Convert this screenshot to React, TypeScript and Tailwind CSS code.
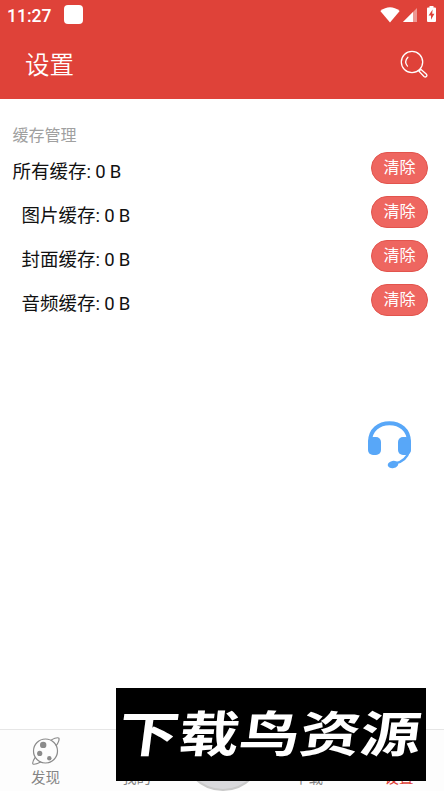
import { useState } from "react";

const rows = [
  { label: "所有缓存", size: "0 B", child: false },
  { label: "图片缓存", size: "0 B", child: true },
  { label: "封面缓存", size: "0 B", child: true },
  { label: "音频缓存", size: "0 B", child: true },
];

function StatusBar() {
  return (
    <div className="flex h-8 items-center pr-2 pl-[7px] text-white">
      <span className="mt-px w-[45px] font-[Roboto] text-[17.5px] leading-none font-medium">11:27</span>
      <span className="mt-[-3px] ml-3 h-[19px] w-[19px] rounded-[4px] bg-white" />
      <svg className="mt-[-2px] ml-auto" width="20" height="16" viewBox="0 0 20 16" fill="currentColor">
        <path d="M0.3 4Q10-3.5 19.7 4L10 15.6Z" />
      </svg>
      <svg className="mt-[-2px] ml-[3px]" width="14" height="14" viewBox="0 0 14 14" fill="currentColor">
        <path d="M14 0V14H0Z" opacity=".45" />
        <path d="M10 4V14H0Z" />
      </svg>
      <svg className="mt-[-4px] ml-[10px]" width="9" height="16" viewBox="0 0 9 16">
        <path d="M2.5 0h4v1.6H8q1 0 1 1V15q0 1-1 1H1q-1 0-1-1V2.600q0-1 1-1h1.500z" fill="#fff" />
        <path d="M5.600 3.500 1.600 9.500h2.400v4.200L7.400 7.700H5.200z" fill="#df4239" />
      </svg>
    </div>
  );
}

function SearchIcon() {
  return (
    <svg width="28" height="28" viewBox="0 0 28 28" fill="none" stroke="#fff" strokeWidth="1.300" strokeLinecap="round">
      <circle cx="12" cy="12" r="10.700" />
      <path d="M7.900 7.200Q3.700 11.600 7.500 16.100" />
      <path d="M20.800 19.300 26.200 24Q27.500 25.500 26.400 26.500 25.300 27.500 24 26.400L19 21.300Z" />
    </svg>
  );
}

function HeadsetIcon() {
  return (
    <svg width="46" height="49" viewBox="0 0 46 49">
      <path d="M3 22C3 10 12 3.200 22.500 3.200S42 10 42 22" fill="none" stroke="#58a7f8" strokeWidth="4" />
      <rect x="1" y="17" width="13" height="18" rx="5" fill="#58a7f8" />
      <rect x="31" y="17" width="13" height="18" rx="5" fill="#58a7f8" />
      <path d="M42.500 30Q39 42 27.500 43.500" fill="none" stroke="#58a7f8" strokeWidth="2.600" />
      <ellipse cx="26" cy="44.500" rx="5.300" ry="3.600" transform="rotate(-12 26 44.500)" fill="#58a7f8" />
    </svg>
  );
}

function PlanetIcon() {
  return (
    <svg width="28" height="28" viewBox="0 0 28 28" fill="none" stroke="#8b8b8b" strokeWidth="1.200">
      <circle cx="13.500" cy="14" r="12" />
      <path d="M18.800 3.200Q25.500-.3 26.900 1.200 27.700 3.700 24 8.900" />
      <path d="M3.200 20.400Q-.2 25.500 1 27 2.800 27.900 8.700 25" />
      <g fill="#8b8b8b" stroke="none">
        <circle cx="11.200" cy="7.900" r="3.200" />
        <circle cx="7.700" cy="16.400" r="2.600" />
        <circle cx="17.300" cy="21.200" r="2.200" />
      </g>
    </svg>
  );
}

export default function App() {
  const [tab, setTab] = useState("设置");

  const tabClass = (name: string) =>
    tab === name ? "text-[#df4239]" : "text-[#858585]";

  return (
    <div className="relative flex h-[791px] w-[444px] flex-col overflow-hidden bg-white font-['Noto_Sans_CJK_SC',sans-serif]">
      <header className="h-[99px] shrink-0 bg-[#df4239]">
        <StatusBar />
        <div className="flex h-[67px] items-center justify-between pr-4 pl-[25px]">
          <h1 className="mt-[-3px] text-[24.500px] leading-none font-[350] text-white">设置</h1>
          <button className="mt-[-4px]">
            <SearchIcon />
          </button>
        </div>
      </header>

      <main className="flex-1 pt-[25px] pr-4 pl-[12.500px]">
        <h2 className="h-[25px] text-base leading-[20px] text-[#a0a0a0]">缓存管理</h2>
        {rows.map((row) => (
          <div key={row.label} className="flex h-11 items-start justify-between pt-[3px]">
            <span
              className={`text-[18.500px] leading-[36px] text-[#111] ${row.child ? "pl-[9px]" : ""}`}
            >
              {row.label}
              <span className="font-[Roboto] tracking-[-0.2px]">: {row.size}</span>
            </span>
            <button className="h-8 w-[57px] rounded-full border border-[#e2544d] bg-[#ee6660] pb-[4px] text-base leading-[26px] text-white">
              清除
            </button>
          </div>
        ))}
      </main>

      <nav className="flex h-[62px] shrink-0 items-start border-t border-[#e6e6e6] bg-[#fdfdfd] text-[14.500px] leading-none">
        <button
          className={`flex w-[91px] flex-col items-center pt-[7px] ${tabClass("发现")}`}
          onClick={() => setTab("发现")}
        >
          <PlanetIcon />
          <span className="mt-[5px]">发现</span>
        </button>
        <button className={`w-[91px] pt-10 ${tabClass("我的")}`} onClick={() => setTab("我的")}>
          我的
        </button>
        <div className="flex h-[61px] w-[81px] items-end justify-center">
          <span className="h-[82px] w-[82px] shrink-0 rounded-full border-2 border-[#c9c9c9] bg-[#d9d9dc]" />
        </div>
        <button className={`w-[91px] pt-10 ${tabClass("下载")}`} onClick={() => setTab("下载")}>
          下载
        </button>
        <button className={`w-[90px] pt-10 ${tabClass("设置")}`} onClick={() => setTab("设置")}>
          设置
        </button>
      </nav>

      <button className="absolute top-[420px] left-[367px]">
        <HeadsetIcon />
      </button>

      <div className="absolute top-[688px] left-[116px] flex h-[93px] w-[310px] items-center justify-center bg-black pr-[2px] pb-[7px]">
        <span className="-skew-x-6 scale-y-[0.810] text-[60.500px] leading-none font-bold whitespace-nowrap text-white">
          下载鸟资源
        </span>
      </div>
    </div>
  );
}
